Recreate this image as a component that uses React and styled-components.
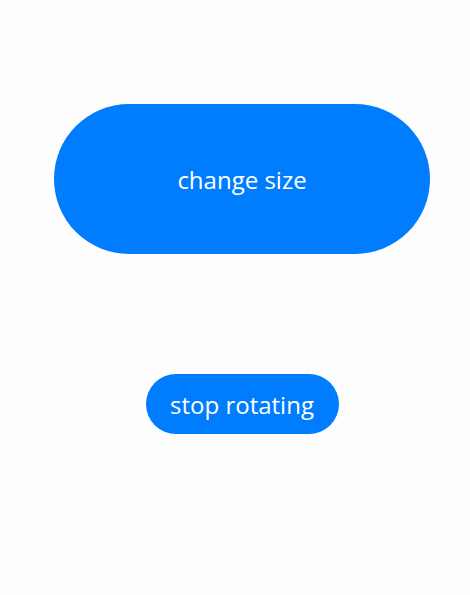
import React from "react";
import styled, { createGlobalStyle } from "styled-components";

const Global = createGlobalStyle`
  html, body { margin: 0; padding: 0; background: #fdfdfd; }
  body { font-family: "Open Sans", sans-serif; }
`;

const Page = styled.div`
  width: 470px;
  height: 595px;
  box-sizing: border-box;
  padding: 104px 0 0 14px;
  display: flex;
  flex-direction: column;
  align-items: center;
  gap: 120px;
`;

const PillButton = styled.button`
  width: ${(p) => p.$w}px;
  height: ${(p) => p.$h}px;
  border: none;
  border-radius: ${(p) => p.$h / 2}px;
  background: #007dff;
  color: #fff;
  font-family: "Open Sans", sans-serif;
  font-size: 24px;
  font-weight: 400;
  display: flex;
  align-items: center;
  justify-content: center;
  padding: 0;
  cursor: pointer;
`;

export default function App() {
  return (
    <>
      <Global />
      <Page>
        <PillButton $w={376} $h={150}>change size</PillButton>
        <PillButton $w={193} $h={60}>stop rotating</PillButton>
      </Page>
    </>
  );
}
